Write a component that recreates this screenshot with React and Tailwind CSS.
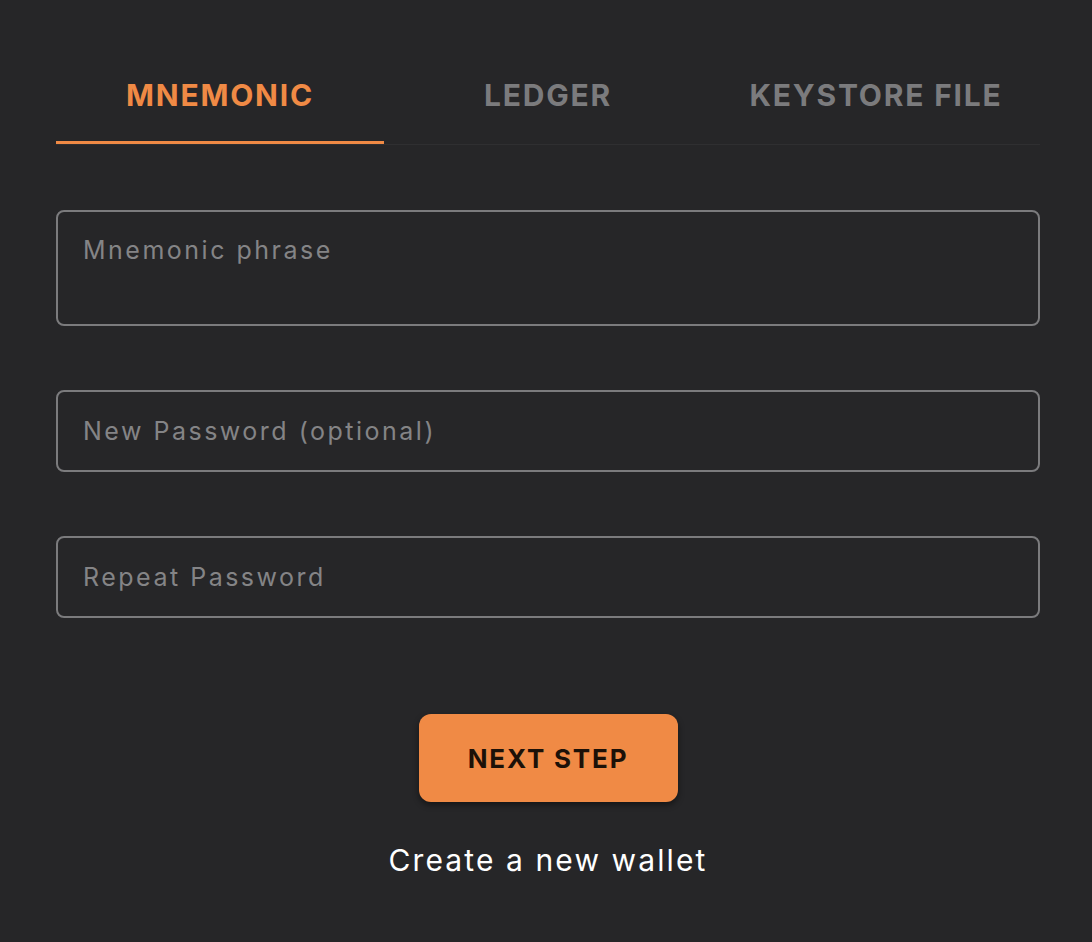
import React, { useState } from "react";

const TABS = ["MNEMONIC", "LEDGER", "KEYSTORE FILE"];

function Field({ placeholder, tall, type = "text" }) {
  if (tall) {
    return (
      <textarea
        placeholder={placeholder}
        className="block w-full h-[116px] resize-none rounded-lg border-2 border-[#7b7b7d] bg-transparent px-[25px] pt-[23px] text-[25px] leading-[30px] tracking-[0.1em] text-white placeholder:text-[#848486] outline-none"
      />
    );
  }
  return (
    <input
      type={type}
      placeholder={placeholder}
      className="block w-full h-[82px] rounded-lg border-2 border-[#7b7b7d] bg-transparent px-[25px] text-[25px] tracking-[0.1em] text-white placeholder:text-[#848486] outline-none"
    />
  );
}

export default function App() {
  const [tab, setTab] = useState(0);

  return (
    <div
      className="min-h-screen bg-[#262628] pl-[56px] pr-[52px] pt-[50px]"
      style={{ fontFamily: "Inter, 'Open Sans', sans-serif" }}
    >
      {/* tabs */}
      <div className="flex border-b border-[#2f2f31]">
        {TABS.map((t, i) => (
          <button
            key={t}
            onClick={() => setTab(i)}
            className={
              "flex-1 h-[94px] border-b-[3px] text-[30px] font-bold tracking-[0.06em] " +
              (tab === i
                ? "border-[#f08a45] text-[#f08a45]"
                : "border-transparent text-[#7b7b7d]")
            }
          >
            {t}
          </button>
        ))}
      </div>

      {/* fields */}
      <div className="mt-[65px] flex flex-col gap-[64px]">
        <Field placeholder="Mnemonic phrase" tall />
        <Field placeholder="New Password (optional)" type="password" />
        <Field placeholder="Repeat Password" type="password" />
      </div>

      <div className="mt-[96px] flex flex-col items-center">
        <button className="h-[88px] w-[259px] rounded-xl bg-[#f08a45] text-[26px] font-bold tracking-[0.07em] text-[#1c1108] shadow-[0_3px_6px_rgba(0,0,0,0.45)]">
          NEXT STEP
        </button>
        <a className="mt-[36px] cursor-pointer text-[30px] tracking-[0.07em] text-white">Create a new wallet</a>
      </div>
    </div>
  );
}
